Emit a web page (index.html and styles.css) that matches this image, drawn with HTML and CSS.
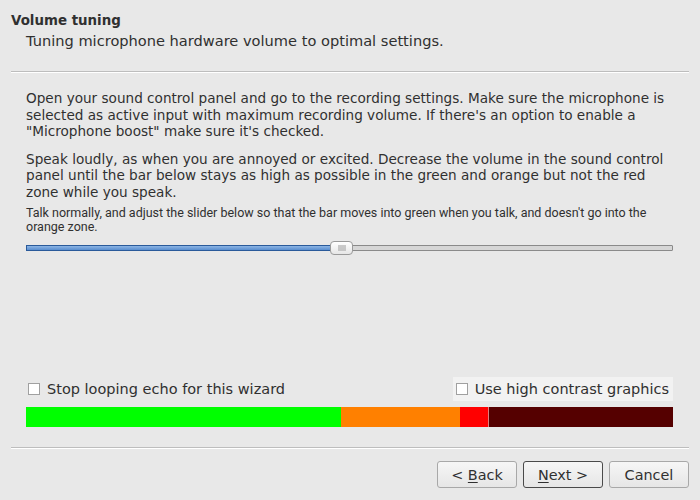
FILE: index.html
```html
<!DOCTYPE html>
<html>
<head>
<meta charset="utf-8">
<link rel="stylesheet" href="styles.css">
</head>
<body>
<div class="wizard">
  <div class="header">
    <div class="title">Volume tuning</div>
    <div class="subtitle">Tuning microphone hardware volume to optimal settings.</div>
  </div>
  <div class="sep"></div>
  <div class="content">
    <p class="para first">Open your sound control panel and go to the recording settings. Make sure the microphone is<br>selected as active input with maximum recording volume. If there's an option to enable a<br>"Microphone boost" make sure it's checked.</p>
    <p class="para second">Speak loudly, as when you are annoyed or excited. Decrease the volume in the sound control<br>panel until the bar below stays as high as possible in the green and orange but not the red<br>zone while you speak.</p>
    <p class="small">Talk normally, and adjust the slider below so that the bar moves into green when you talk, and doesn't go into the<br>orange zone.</p>
    <div class="slider">
      <div class="groove"><div class="fill"></div></div>
      <div class="handle"><span class="grip"></span></div>
    </div>
    <div class="spacer"></div>
    <div class="checks">
      <label class="check"><span class="box"></span>Stop looping echo for this wizard</label>
      <label class="check hc"><span class="box"></span>Use high contrast graphics</label>
    </div>
    <div class="meter">
      <div class="seg green"></div>
      <div class="seg orange"></div>
      <div class="seg red"></div>
      <div class="seg dark"></div>
    </div>
  </div>
  <div class="sep bottom"></div>
  <div class="buttons">
    <button class="btn">&lt; <u>B</u>ack</button>
    <button class="btn default"><u>N</u>ext &gt;</button>
    <button class="btn">Cancel</button>
  </div>
</div>
</body>
</html>
```
FILE: styles.css
```css
html, body {
  margin: 0;
  padding: 0;
  background: #e8e8e8;
}
body {
  font-family: "DejaVu Sans", "Open Sans", sans-serif;
  font-size: 14.4px;
  color: #303030;
}
.wizard {
  width: 700px;
  height: 500px;
  display: flex;
  flex-direction: column;
}
.header {
  padding: 12px 11px 0 11px;
}
.title {
  font-weight: bold;
  font-size: 13.4px;
  line-height: 17px;
  height: 17px;
}
.subtitle {
  padding-left: 15px;
  line-height: 17px;
  margin-top: 3px;
  font-size: 14.6px;
}
.sep {
  margin: 22px 11px 0 11px;
  border-top: 1px solid #bdbdbd;
  border-bottom: 1px solid #ffffff;
  height: 0;
}
.content {
  padding: 0 27px 0 26px;
  display: flex;
  flex-direction: column;
}
.para {
  margin: 0;
  font-size: 13.6px;
  line-height: 16.5px;
  white-space: nowrap;
}
.para.first {
  margin-top: 17px;
}
.para.second {
  margin-top: 11px;
}
.small {
  margin: 6px 0 0 0;
  font-family: "Roboto", "Liberation Sans", sans-serif;
  font-size: 12.5px;
  line-height: 14px;
  white-space: nowrap;
}
.slider {
  position: relative;
  height: 14px;
  margin-top: 7px;
}
.groove {
  position: absolute;
  left: 0;
  right: 0;
  top: 4px;
  height: 4px;
  background: #d6d6d6;
  border: 1px solid #8a8a8a;
  border-radius: 1px;
}
.fill {
  width: 306px;
  height: 100%;
  background: linear-gradient(#8cb4e4, #5a8ed0);
  box-shadow: 0 0 0 1px #2a5a9a;
}
.handle {
  position: absolute;
  left: 304px;
  top: 0;
  width: 21px;
  height: 12px;
  border: 1px solid #9a9a9a;
  border-radius: 4px;
  background: linear-gradient(#ffffff, #e6e6e6);
  display: flex;
  align-items: center;
  justify-content: center;
}
.grip {
  width: 8px;
  height: 6px;
  background-image: radial-gradient(circle, #b0b0b0 0.6px, transparent 0.9px);
  background-size: 2px 2px;
}
.spacer {
  height: 122px;
}
.checks {
  display: flex;
  justify-content: space-between;
  align-items: center;
  height: 24px;
}
.check {
  display: flex;
  align-items: center;
  font-size: 14.5px;
  height: 24px;
  padding: 0 4px 0 2px;
}
.check .box {
  width: 10px;
  height: 10px;
  background: #ffffff;
  border: 1px solid #a0a0a0;
  margin-right: 7px;
}
.check.hc {
  background: #f2f2f2;
  padding-left: 3px;
}
.meter {
  display: flex;
  height: 20px;
  margin-top: 6px;
}
.seg { height: 100%; }
.green { width: 315px; background: #00ff00; }
.orange { width: 119px; background: #ff8000; }
.red { width: 28px; background: #ff0000; border-right: 1px solid #e08080; }
.dark { flex: 1; background: #550000; }
.sep.bottom {
  margin-top: 20px;
}
.buttons {
  display: flex;
  justify-content: flex-end;
  gap: 6px;
  padding: 12px 11px 0 0;
}
.btn {
  width: 80px;
  height: 27px;
  font-family: inherit;
  font-size: 14.4px;
  color: #303030;
  background: linear-gradient(#f6f6f6, #e6e6e6);
  border: 1px solid #a8a8a8;
  border-radius: 3px;
  padding: 0;
}
.btn.default {
  border-color: #4a4a4a;
}
.btn u {
  text-decoration-thickness: 1px;
  text-underline-offset: 2px;
}
```
